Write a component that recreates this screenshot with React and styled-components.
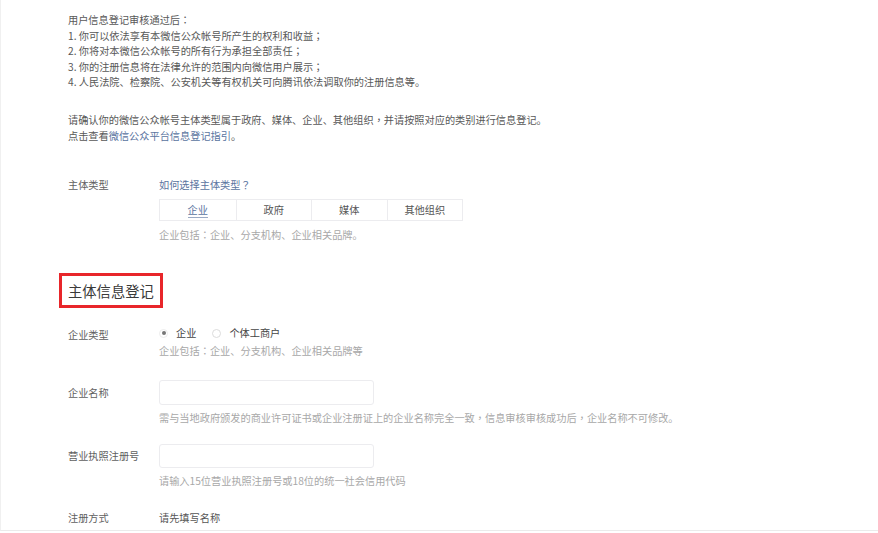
import React from "react";
import styled, { createGlobalStyle } from "styled-components";

const Global = createGlobalStyle`
  html, body { margin: 0; padding: 0; background: #fff; }
  body {
    font-family: "Noto Sans CJK SC", "Noto Sans", sans-serif;
  }
`;

const Page = styled.div`
  box-sizing: border-box;
  width: 878px;
  height: 531px;
  padding: 12px 0 0 67px;
  border-bottom: 1px solid #ebebeb;
  border-left: 1px solid #f0f0f0;
  font-size: 10.2px;
  line-height: 15.6px;
  color: #585858;
  overflow: hidden;
  text-spacing-trim: space-all;
`;

const Punct = styled.span`
  font-family: "Noto Sans CJK TC", "Noto Sans CJK SC", sans-serif;
  font-feature-settings: "locl" 1;
`;

const T = ({ children }) => {
  const parts = String(children).split(/([：；，？])/);
  return (
    <>
      {parts.map((p, i) =>
        /^[：；，？]$/.test(p) ? (
          <Punct key={i} lang="zh-TW">
            {p}
          </Punct>
        ) : (
          <React.Fragment key={i}>{p}</React.Fragment>
        )
      )}
    </>
  );
};

const Para = styled.div`
  margin-bottom: ${(p) => p.$gap || 0}px;
`;

const Line = styled.div`
  white-space: nowrap;
`;

const Link = styled.a`
  color: #5a74a0;
  text-decoration: none;
`;

const Row = styled.div`
  display: flex;
  align-items: flex-start;
  margin-top: ${(p) => p.$mt || 0}px;
`;

const Label = styled.div`
  width: 91px;
  flex: none;
  color: #5f5f5f;
  line-height: ${(p) => p.$lh || 16}px;
`;

const Field = styled.div`
  display: flex;
  flex-direction: column;
  align-items: flex-start;
  line-height: 16px;
`;

const Tabs = styled.div`
  display: flex;
  margin-top: 6px;
  border: 1px solid #ececef;
`;

const Tab = styled.div`
  box-sizing: border-box;
  width: 75.5px;
  height: 20px;
  line-height: 20px;
  text-align: center;
  color: ${(p) => (p.$active ? "#5a74a0" : "#555")};
  border-left: ${(p) => (p.$first ? "none" : "1px solid #ececef")};
  & > span {
    ${(p) => (p.$active ? "border-bottom: 1px solid #9aaac4;" : "")}
  }
`;

const Hint = styled.div`
  color: #a8a8a8;
  margin-top: ${(p) => p.$mt || 0}px;
  white-space: nowrap;
`;

const Heading = styled.div`
  box-sizing: border-box;
  margin: 30px 0 0 -9px;
  width: 104px;
  height: 35px;
  border: 3px solid #e8262a;
  padding-left: 6px;
  font-size: 14.3px;
  line-height: 29px;
  color: #3a3a3a;
`;

const Radios = styled.div`
  display: flex;
  align-items: center;
  margin-top: -2px;
`;

const RadioItem = styled.label`
  display: flex;
  align-items: center;
  margin-right: ${(p) => p.$mr || 0}px;
  color: #444;
`;

const Circle = styled.span`
  box-sizing: border-box;
  width: 9px;
  height: 9px;
  border-radius: 50%;
  border: 1px solid ${(p) => (p.$on ? "#ececec" : "#dcdcdc")};
  margin-right: 8px;
  display: flex;
  align-items: center;
  justify-content: center;
  &::after {
    content: "";
    width: 4px;
    height: 4px;
    border-radius: 50%;
    background: ${(p) => (p.$on ? "#777" : "transparent")};
  }
`;

const Input = styled.div`
  box-sizing: border-box;
  width: 215px;
  height: ${(p) => p.$h || 25}px;
  border: 1px solid #ececef;
  border-radius: 3px;
  background: #fff;
`;

const Plain = styled.div`
  color: #555;
`;

export default function App() {
  return (
    <>
      <Global />
      <Page lang="zh-CN">
        <Para $gap={22}>
          <Line><T>用户信息登记审核通过后：</T></Line>
          <Line><T>1. 你可以依法享有本微信公众帐号所产生的权利和收益；</T></Line>
          <Line><T>2. 你将对本微信公众帐号的所有行为承担全部责任；</T></Line>
          <Line><T>3. 你的注册信息将在法律允许的范围内向微信用户展示；</T></Line>
          <Line>4. 人民法院、检察院、公安机关等有权机关可向腾讯依法调取你的注册信息等。</Line>
        </Para>
        <Para>
          <Line><T>请确认你的微信公众帐号主体类型属于政府、媒体、企业、其他组织，并请按照对应的类别进行信息登记。</T></Line>
          <Line>
            点击查看<Link>微信公众平台信息登记指引</Link>。
          </Line>
        </Para>

        <Row $mt={34}>
          <Label>主体类型</Label>
          <Field>
            <Link><T>如何选择主体类型？</T></Link>
            <Tabs>
              <Tab $first $active><span>企业</span></Tab>
              <Tab><span>政府</span></Tab>
              <Tab><span>媒体</span></Tab>
              <Tab><span>其他组织</span></Tab>
            </Tabs>
            <Hint $mt={6}><T>企业包括：企业、分支机构、企业相关品牌。</T></Hint>
          </Field>
        </Row>

        <Heading>主体信息登记</Heading>

        <Row $mt={19}>
          <Label>企业类型</Label>
          <Field>
            <Radios>
              <RadioItem $mr={16}>
                <Circle $on />
                企业
              </RadioItem>
              <RadioItem>
                <Circle />
                个体工商户
              </RadioItem>
            </Radios>
            <Hint $mt={2}><T>企业包括：企业、分支机构、企业相关品牌等</T></Hint>
          </Field>
        </Row>

        <Row $mt={21}>
          <Label $lh={25}>企业名称</Label>
          <Field>
            <Input $h={25} />
            <Hint $mt={5}><T>需与当地政府颁发的商业许可证书或企业注册证上的企业名称完全一致，信息审核审核成功后，企业名称不可修改。</T></Hint>
          </Field>
        </Row>

        <Row $mt={18}>
          <Label $lh={24}>营业执照注册号</Label>
          <Field>
            <Input $h={24} />
            <Hint $mt={5}>请输入15位营业执照注册号或18位的统一社会信用代码</Hint>
          </Field>
        </Row>

        <Row $mt={21}>
          <Label>注册方式</Label>
          <Plain>请先填写名称</Plain>
        </Row>
      </Page>
    </>
  );
}
